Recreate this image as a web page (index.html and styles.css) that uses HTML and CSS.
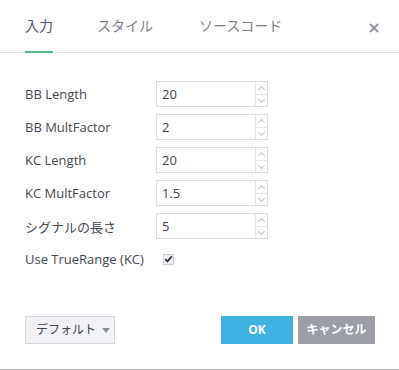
FILE: index.html
```html
<!DOCTYPE html>
<html lang="ja">
<head>
<meta charset="utf-8">
<link rel="stylesheet" href="styles.css">
</head>
<body>
<div class="dialog">
  <div class="tabs">
    <div class="tab active">入力</div>
    <div class="tab">スタイル</div>
    <div class="tab">ソースコード</div>
    <div class="close">
      <svg width="10" height="10" viewBox="0 0 10 10"><path d="M1 1L9 9M9 1L1 9" stroke="#8f939c" stroke-width="1.8"/></svg>
    </div>
  </div>
  <div class="form">
    <div class="row"><div class="label">BB Length</div><div class="input"><span class="val">20</span><span class="spin"><i class="up"></i><i class="down"></i></span></div></div>
    <div class="row"><div class="label">BB MultFactor</div><div class="input"><span class="val">2</span><span class="spin"><i class="up"></i><i class="down"></i></span></div></div>
    <div class="row"><div class="label">KC Length</div><div class="input"><span class="val">20</span><span class="spin"><i class="up"></i><i class="down"></i></span></div></div>
    <div class="row"><div class="label">KC MultFactor</div><div class="input"><span class="val">1.5</span><span class="spin"><i class="up"></i><i class="down"></i></span></div></div>
    <div class="row"><div class="label">シグナルの長さ</div><div class="input"><span class="val">5</span><span class="spin"><i class="up"></i><i class="down"></i></span></div></div>
    <div class="row"><div class="label label-auto">Use TrueRange (KC)</div><div class="check"><svg width="9" height="8" viewBox="0 0 9 8"><path d="M1.2 4.2L3.4 6.4L7.8 1.4" stroke="#2f3136" stroke-width="1.8" fill="none"/></svg></div></div>
  </div>
  <div class="footer">
    <div class="default">デフォルト<span class="caret"></span></div>
    <div class="spacer"></div>
    <div class="btn ok">OK</div>
    <div class="btn cancel">キャンセル</div>
  </div>
</div>
</body>
</html>
```
FILE: styles.css
```css
* { box-sizing: border-box; }
html, body { margin: 0; padding: 0; background: #fff; }
body {
  font-family: "Open Sans", "Noto Sans CJK JP", sans-serif;
  font-size: 13px;
  color: #4a4d55;
}
.dialog {
  width: 399px;
  height: 370px;
  border-bottom: 1px solid #b7b7b7;
  display: flex;
  flex-direction: column;
}
.tabs {
  height: 53px;
  border-bottom: 1px solid #e0e3e8;
  display: flex;
  align-items: stretch;
  padding-left: 25px;
  padding-right: 20px;
}
.tab {
  font-size: 14px;
  line-height: 52px;
  color: #7d818c;
  margin-right: 44px;
  height: 53px;
}
.tab.active {
  color: #4f535e;
  border-bottom: 2px solid #53b987;
  line-height: 51px;
}
.tab:nth-child(2) { margin-right: 46px; }
.close {
  margin-left: auto;
  padding-top: 19px;
}
.form {
  padding: 28px 0 0 25px;
  display: flex;
  flex-direction: column;
  gap: 7px;
}
.row {
  display: flex;
  align-items: center;
  height: 26px;
}
.label {
  width: 131px;
  color: #45484f;
}
.label-auto { width: 138px; }
.input {
  width: 112px;
  height: 26px;
  border: 1px solid #dcdee3;
  display: flex;
  align-items: stretch;
}
.val {
  flex: 1;
  padding-left: 5px;
  line-height: 24px;
  color: #3f4249;
}
.spin {
  width: 12px;
  border-left: 1px solid #e3e5e9;
  display: flex;
  flex-direction: column;
}
.spin i {
  flex: 1;
  position: relative;
}
.spin i.up { border-bottom: 1px solid #e3e5e9; }
.spin i::after {
  content: "";
  position: absolute;
  left: 3px;
  width: 4px;
  height: 4px;
  border-left: 1px solid #b5c3d2;
  border-top: 1px solid #b5c3d2;
}
.spin i.up::after { top: 5px; transform: rotate(45deg); }
.spin i.down::after { top: 2px; transform: rotate(225deg); }
.check {
  width: 11px;
  height: 11px;
  border: 1px solid #c9cbd0;
  background: #eef0f3;
  display: flex;
  align-items: center;
  justify-content: center;
}
.footer {
  margin-top: auto;
  margin-bottom: 25px;
  display: flex;
  padding: 0 24px 0 25px;
  gap: 5px;
}
.spacer { flex: 1; }
.default {
  width: 90px;
  height: 28px;
  border: 1px solid #d6d8dd;
  background: #f1f2f6;
  font-size: 12px;
  line-height: 26px;
  padding-left: 10px;
  color: #3e4149;
  display: flex;
  align-items: center;
}
.caret {
  margin-left: 6px;
  width: 0;
  height: 0;
  border-left: 4px solid transparent;
  border-right: 4px solid transparent;
  border-top: 5px solid #8d9099;
}
.btn {
  height: 28px;
  line-height: 28px;
  text-align: center;
  color: #fff;
  font-weight: bold;
  font-size: 12px;
}
.ok { width: 72px; background: #3db2e3; }
.cancel { width: 77px; background: #9b9ea6; }
```
